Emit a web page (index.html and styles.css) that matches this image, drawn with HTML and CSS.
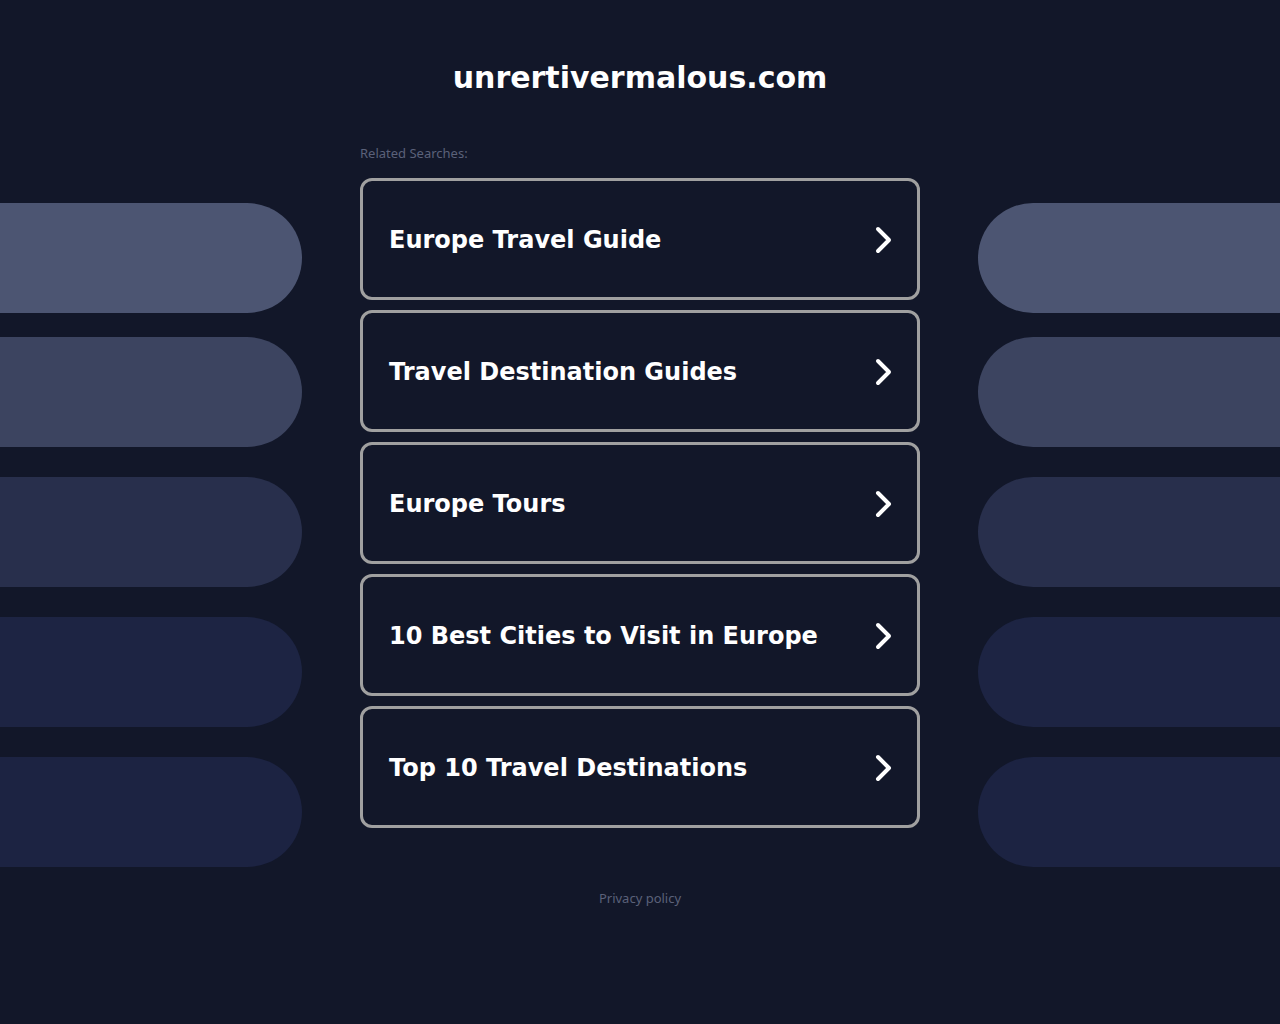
FILE: index.html
```html
<!DOCTYPE html>
<html lang="en">
<head>
    <meta charset="UTF-8">
    <meta name="viewport" content="width=device-width, initial-scale=1.0">
    <title>unrertivermalous.com</title>
    <link rel="stylesheet" href="styles.css">
</head>
<body>
    <div class="page">
        <div class="side side-left">
            <div class="pill pill-1"></div>
            <div class="pill pill-2"></div>
            <div class="pill pill-3"></div>
            <div class="pill pill-4"></div>
            <div class="pill pill-5"></div>
        </div>

        <div class="main">
            <h1 class="domain">unrertivermalous.com</h1>
            <p class="label">Related Searches:</p>

            <div class="links">
                <a class="link" href="#">
                    <span>Europe Travel Guide</span>
                    <svg class="chevron" width="20" height="30" viewBox="0 0 20 30"><polyline points="4,4 15,15 4,26"/></svg>
                </a>
                <a class="link" href="#">
                    <span>Travel Destination Guides</span>
                    <svg class="chevron" width="20" height="30" viewBox="0 0 20 30"><polyline points="4,4 15,15 4,26"/></svg>
                </a>
                <a class="link" href="#">
                    <span>Europe Tours</span>
                    <svg class="chevron" width="20" height="30" viewBox="0 0 20 30"><polyline points="4,4 15,15 4,26"/></svg>
                </a>
                <a class="link" href="#">
                    <span>10 Best Cities to Visit in Europe</span>
                    <svg class="chevron" width="20" height="30" viewBox="0 0 20 30"><polyline points="4,4 15,15 4,26"/></svg>
                </a>
                <a class="link" href="#">
                    <span>Top 10 Travel Destinations</span>
                    <svg class="chevron" width="20" height="30" viewBox="0 0 20 30"><polyline points="4,4 15,15 4,26"/></svg>
                </a>
            </div>

            <a class="privacy" href="#">Privacy policy</a>
        </div>

        <div class="side side-right">
            <div class="pill pill-1"></div>
            <div class="pill pill-2"></div>
            <div class="pill pill-3"></div>
            <div class="pill pill-4"></div>
            <div class="pill pill-5"></div>
        </div>
    </div>
</body>
</html>
```

FILE: styles.css
```css
html, body {
    margin: 0;
    padding: 0;
    background-color: #121729;
}
body {
    min-height: 1024px;
    font-family: "DejaVu Sans", sans-serif;
    color: #fff;
}
.page {
    display: grid;
    grid-template-columns: 302px 560px 302px;
    column-gap: 58px;
}
.side {
    display: flex;
    flex-direction: column;
    padding-top: 203px;
    gap: 30px;
}
.pill {
    height: 110px;
}
.side .pill-2 {
    margin-top: -6px;
}
.side-left .pill {
    border-radius: 0 55px 55px 0;
}
.side-right .pill {
    border-radius: 55px 0 0 55px;
}
.pill-1 { background-color: #4c5572; }
.pill-2 { background-color: #3c4460; }
.pill-3 { background-color: #282f4c; }
.pill-4 { background-color: #1d2443; }
.pill-5 { background-color: #1c2342; }

.main {
    display: flex;
    flex-direction: column;
}
.domain {
    margin: 60px 0 0;
    font-size: 30px;
    line-height: 36px;
    font-weight: bold;
    text-align: center;
}
.label {
    margin: 49px 0 0;
    font-family: "Noto Sans", sans-serif;
    font-size: 13px;
    line-height: 16px;
    color: #5b6179;
}
.links {
    margin-top: 17px;
    display: flex;
    flex-direction: column;
    gap: 10px;
}
.link {
    box-sizing: border-box;
    height: 122px;
    border: 3px solid #a0a0a0;
    border-radius: 12px;
    padding: 2px 23px 0 26px;
    display: flex;
    align-items: center;
    justify-content: space-between;
    color: #fff;
    text-decoration: none;
    font-size: 24px;
    font-weight: bold;
}
.chevron polyline {
    fill: none;
    stroke: #fff;
    stroke-width: 4;
    stroke-linecap: round;
    stroke-linejoin: round;
}
.privacy {
    margin-top: 62px;
    align-self: center;
    font-family: "Noto Sans", sans-serif;
    font-size: 13px;
    line-height: 16px;
    color: #5b6179;
    text-decoration: none;
}
```
